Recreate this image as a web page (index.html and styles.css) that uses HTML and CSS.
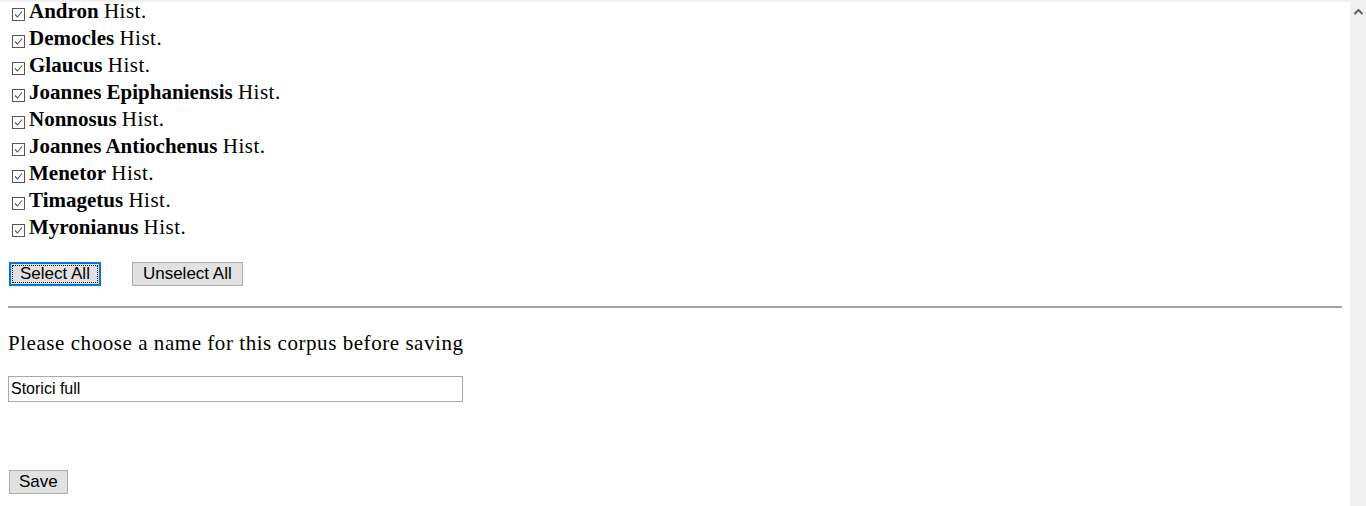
FILE: index.html
```html
<!DOCTYPE html>
<html lang="en">
<head>
  <meta charset="UTF-8">
  <meta name="viewport" content="width=device-width, initial-scale=1.0">
  <title>Corpus</title>
  <link rel="stylesheet" href="styles.css">
</head>
<body>
  <div class="page">
    <div class="content">
      <ul class="authors">
        <li><span class="box"><svg width="13" height="13" viewBox="0 0 13 13"><rect x="0.5" y="0.5" width="12" height="12" fill="#fff" stroke="#555"/><path d="M3 6.5 L5.5 9 L10 3.5" fill="none" stroke="#555" stroke-width="1.1"/></svg></span><b>Andron</b> <span class="hist">Hist.</span></li>
        <li><span class="box"><svg width="13" height="13" viewBox="0 0 13 13"><rect x="0.5" y="0.5" width="12" height="12" fill="#fff" stroke="#555"/><path d="M3 6.5 L5.5 9 L10 3.5" fill="none" stroke="#555" stroke-width="1.1"/></svg></span><b>Democles</b> <span class="hist">Hist.</span></li>
        <li><span class="box"><svg width="13" height="13" viewBox="0 0 13 13"><rect x="0.5" y="0.5" width="12" height="12" fill="#fff" stroke="#555"/><path d="M3 6.5 L5.5 9 L10 3.5" fill="none" stroke="#555" stroke-width="1.1"/></svg></span><b>Glaucus</b> <span class="hist">Hist.</span></li>
        <li><span class="box"><svg width="13" height="13" viewBox="0 0 13 13"><rect x="0.5" y="0.5" width="12" height="12" fill="#fff" stroke="#555"/><path d="M3 6.5 L5.5 9 L10 3.5" fill="none" stroke="#555" stroke-width="1.1"/></svg></span><b>Joannes Epiphaniensis</b> <span class="hist">Hist.</span></li>
        <li><span class="box"><svg width="13" height="13" viewBox="0 0 13 13"><rect x="0.5" y="0.5" width="12" height="12" fill="#fff" stroke="#555"/><path d="M3 6.5 L5.5 9 L10 3.5" fill="none" stroke="#555" stroke-width="1.1"/></svg></span><b>Nonnosus</b> <span class="hist">Hist.</span></li>
        <li><span class="box"><svg width="13" height="13" viewBox="0 0 13 13"><rect x="0.5" y="0.5" width="12" height="12" fill="#fff" stroke="#555"/><path d="M3 6.5 L5.5 9 L10 3.5" fill="none" stroke="#555" stroke-width="1.1"/></svg></span><b>Joannes Antiochenus</b> <span class="hist">Hist.</span></li>
        <li><span class="box"><svg width="13" height="13" viewBox="0 0 13 13"><rect x="0.5" y="0.5" width="12" height="12" fill="#fff" stroke="#555"/><path d="M3 6.5 L5.5 9 L10 3.5" fill="none" stroke="#555" stroke-width="1.1"/></svg></span><b>Menetor</b> <span class="hist">Hist.</span></li>
        <li><span class="box"><svg width="13" height="13" viewBox="0 0 13 13"><rect x="0.5" y="0.5" width="12" height="12" fill="#fff" stroke="#555"/><path d="M3 6.5 L5.5 9 L10 3.5" fill="none" stroke="#555" stroke-width="1.1"/></svg></span><b>Timagetus</b> <span class="hist">Hist.</span></li>
        <li><span class="box"><svg width="13" height="13" viewBox="0 0 13 13"><rect x="0.5" y="0.5" width="12" height="12" fill="#fff" stroke="#555"/><path d="M3 6.5 L5.5 9 L10 3.5" fill="none" stroke="#555" stroke-width="1.1"/></svg></span><b>Myronianus</b> <span class="hist">Hist.</span></li>
      </ul>

      <div class="actions">
        <button class="btn focused">Select All</button>
        <button class="btn">Unselect All</button>
      </div>

      <hr>

      <p class="prompt">Please choose a name for this corpus before saving</p>
      <input class="name" type="text" value="Storici full">

      <div class="save-row">
        <button class="btn">Save</button>
      </div>
    </div>

    <div class="scrollbar">
      <svg width="9" height="6" viewBox="0 0 9 6"><path d="M0.5 5 L4.5 1 L8.5 5" fill="none" stroke="#606060" stroke-width="2"/></svg>
    </div>
  </div>
</body>
</html>
```

FILE: styles.css
```css
body {
  margin: 0;
  background-color: #fff;
  color: #000;
  font-family: "Liberation Serif", serif;
  overflow: hidden;
}

.page {
  display: flex;
  height: 506px;
}

.content {
  flex: 1;
  padding: 0 8px;
  border-top: 2px solid #f0f0f0;
  overflow: hidden;
}

.scrollbar {
  width: 16px;
  background-color: #f0f0f0;
  display: flex;
  justify-content: center;
  padding-top: 9px;
  box-sizing: border-box;
}

.authors {
  list-style: none;
  margin: -4px 0 0 0;
  padding: 0;
  font-size: 21px;
  line-height: 27px;
}

.authors li {
  white-space: nowrap;
}

.hist {
  letter-spacing: 0.5px;
}

.box {
  display: inline-block;
  width: 13px;
  height: 13px;
  margin: 0 4px 0 4px;
  vertical-align: -3px;
}

.box svg {
  display: block;
}

.actions {
  margin-top: 21px;
  display: flex;
  gap: 30px;
}

.btn {
  font-family: "Liberation Sans", Arial, sans-serif;
  font-size: 17px;
  background-color: #e1e1e1;
  border: 1px solid #adadad;
  padding: 0 10px;
  margin-left: 1px;
  color: #000;
  height: 24px;
  line-height: 20px;
}

.btn.focused {
  border: 2px solid #0078d7;
  outline: 1px dotted #000;
  outline-offset: -4px;
  padding: 0 9px;
}

hr {
  margin: 20px 0 0 0;
  border: none;
  border-top: 2px solid #a0a0a0;
}

.prompt {
  font-size: 21px;
  letter-spacing: 0.55px;
  margin: 21px 0 0 0;
  line-height: 28px;
}

.name {
  display: block;
  margin-top: 19px;
  width: 455px;
  height: 26px;
  box-sizing: border-box;
  border: 1px solid #a9a9a9;
  padding: 0 2px;
  font-family: "Liberation Sans", Arial, sans-serif;
  font-size: 16px;
  color: #000;
}

.save-row {
  margin-top: 68px;
}

.save-row .btn {
  padding: 0 9px;
}
```
